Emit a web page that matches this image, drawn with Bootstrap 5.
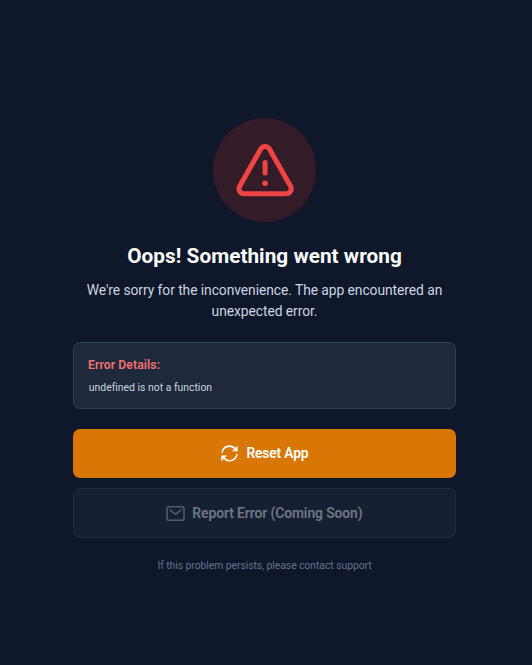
<!DOCTYPE html>
<html lang="en">
<head>
<meta charset="utf-8">
<meta name="viewport" content="width=device-width, initial-scale=1">
<title>Oops! Something went wrong</title>
<link href="https://cdn.jsdelivr.net/npm/bootstrap@5.3.0/dist/css/bootstrap.min.css" rel="stylesheet">
<style>
body{background:#0f172a;font-family:Roboto,"Liberation Sans",sans-serif;padding-right:3px}
.error-screen{width:382.6px;padding-top:117.8px}
.alert-disc{width:103.8px;height:103.8px;background:#331b28;margin-bottom:21px}
.error-title{font-size:20.75px;line-height:27px;margin-bottom:10.4px;letter-spacing:.04px}
.error-text{font-size:13.83px;line-height:20.75px;color:#cbd5e1;margin-bottom:20.3px;padding:0 10px;letter-spacing:-.06px}
.details{height:67px;background:#1e293b;border:1px solid #334155;border-radius:7px;padding:13.8px;margin-bottom:20.5px}
.details-title{font-size:12.1px;line-height:17px;font-weight:600;color:#f87171;margin-bottom:7px;letter-spacing:.13px}
.details-code{font-size:10.37px;line-height:14px;color:#cbd5e1;padding-left:.8px;letter-spacing:.02px}
.action{height:48.4px;border:0;border-radius:7px;font-size:13.83px;font-weight:600;gap:6.9px;letter-spacing:-.07px}
.action-reset,.action-reset:hover{background:#d97706;color:#fff;margin-bottom:10.4px;letter-spacing:-.15px}
.action-report,.action-report:disabled{height:50px;background:#1e293b;border:1px solid #334155;color:#cbd5e1;opacity:.5}
.foot-note{font-size:10.37px;line-height:14px;color:#64748b;margin-top:20.5px;letter-spacing:-.05px}
</style>
</head>
<body>
<main class="error-screen mx-auto d-flex flex-column align-items-stretch">
  <div class="alert-disc rounded-circle align-self-center">
    <svg class="d-block" width="103.8" height="103.8" viewBox="0 0 103.8 103.8" fill="none" stroke="#ef4444" stroke-width="5" stroke-linecap="round" stroke-linejoin="round">
      <path d="M47.75 30.94 26.65 68.24A5 5 0 0 0 31 75.7H73.2A5 5 0 0 0 77.55 68.24L56.45 30.94A5 5 0 0 0 47.75 30.94Z"/>
      <path d="M52.1 44.4V55"/>
      <circle cx="52.1" cy="65.2" r="2.8" fill="#ef4444" stroke="none"/>
    </svg>
  </div>
  <h1 class="error-title text-white text-center fw-bold">Oops! Something went wrong</h1>
  <p class="error-text text-center">We're sorry for the inconvenience. The app encountered an unexpected error.</p>
  <section class="details">
    <div class="details-title">Error Details:</div>
    <div class="details-code">undefined is not a function</div>
  </section>
  <button type="button" class="btn action action-reset d-flex align-items-center justify-content-center p-0">
    <svg width="19" height="19" viewBox="0 0 19 19" fill="none" stroke="currentColor" stroke-width="1.55" stroke-linecap="round" stroke-linejoin="round">
      <path d="M2.2 8.2A7.4 7.4 0 0 1 15.3 5L16 5.8M16.8 10.6A7.4 7.4 0 0 1 3.7 13.8L3 13"/>
      <path d="M17.4 2.4V7.1H12.7ZM1.6 16.4V11.7H6.3Z" fill="currentColor" stroke-width=".5"/>
    </svg>
    <span>Reset App</span>
  </button>
  <button type="button" class="btn action action-report d-flex align-items-center justify-content-center p-0" disabled>
    <svg width="19" height="19" viewBox="0 0 19 19" fill="none" stroke="#94a3b8" stroke-width="1.55" stroke-linecap="round" stroke-linejoin="round">
      <rect x="1" y="2.7" width="17" height="13.5" rx="1.8"/>
      <path d="m4 6 5.5 4.3L15 6"/>
    </svg>
    <span>Report Error (Coming Soon)</span>
  </button>
  <p class="foot-note text-center mb-0">If this problem persists, please contact support</p>
</main>
<script src="https://cdn.jsdelivr.net/npm/bootstrap@5.3.0/dist/js/bootstrap.bundle.min.js"></script>
</body>
</html>
